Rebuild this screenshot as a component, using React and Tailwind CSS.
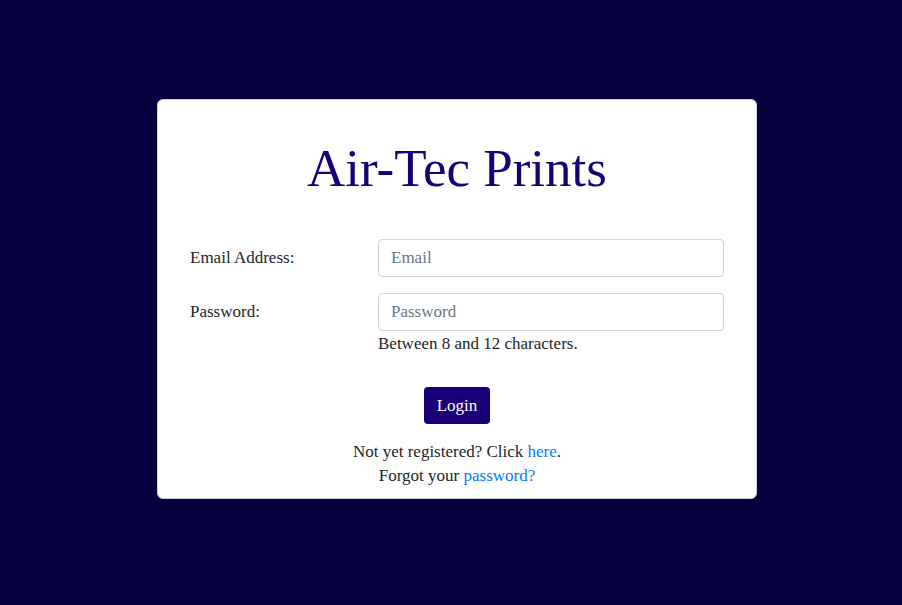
export default function App() {
  return (
    <div
      className="min-h-screen w-full bg-[#07003f] flex justify-center pt-[99px] pl-[12px]"
      style={{ fontFamily: '"Liberation Serif", "DejaVu Serif", serif' }}
    >
      <div className="w-[600px] h-[400px] bg-white border border-[#d0d0d8] rounded-md px-[32px] pt-[34px]">
        <h1 className="text-center text-[53px] leading-[68px] text-[#1a0078]">
          Air-Tec Prints
        </h1>

        <form className="mt-[37px] text-[17px] text-[#212529]">
          <div className="flex items-center">
            <label className="w-[188px]">Email Address:</label>
            <input
              type="email"
              placeholder="Email"
              className="w-[346px] h-[38px] border border-[#ced4da] rounded px-3 text-[17px] placeholder:text-[#6c757d] outline-none"
            />
          </div>

          <div className="flex items-start mt-[16px]">
            <label className="w-[188px] leading-[38px]">Password:</label>
            <div>
              <input
                type="password"
                placeholder="Password"
                className="w-[346px] h-[38px] border border-[#ced4da] rounded px-3 text-[17px] placeholder:text-[#6c757d] outline-none"
              />
              <p className="mt-[1px] leading-[24px]">Between 8 and 12 characters.</p>
            </div>
          </div>

          <div className="flex justify-center mt-[31px]">
            <button
              type="button"
              className="bg-[#1a0078] text-white rounded px-[13px] h-[37px] text-[17px]"
            >
              Login
            </button>
          </div>

          <div className="text-center mt-[16px] leading-[24px]">
            <p>
              Not yet registered? Click <a href="#" className="text-[#007bff]">here</a>.
            </p>
            <p>
              Forgot your <a href="#" className="text-[#007bff]">password?</a>
            </p>
          </div>
        </form>
      </div>
    </div>
  );
}
